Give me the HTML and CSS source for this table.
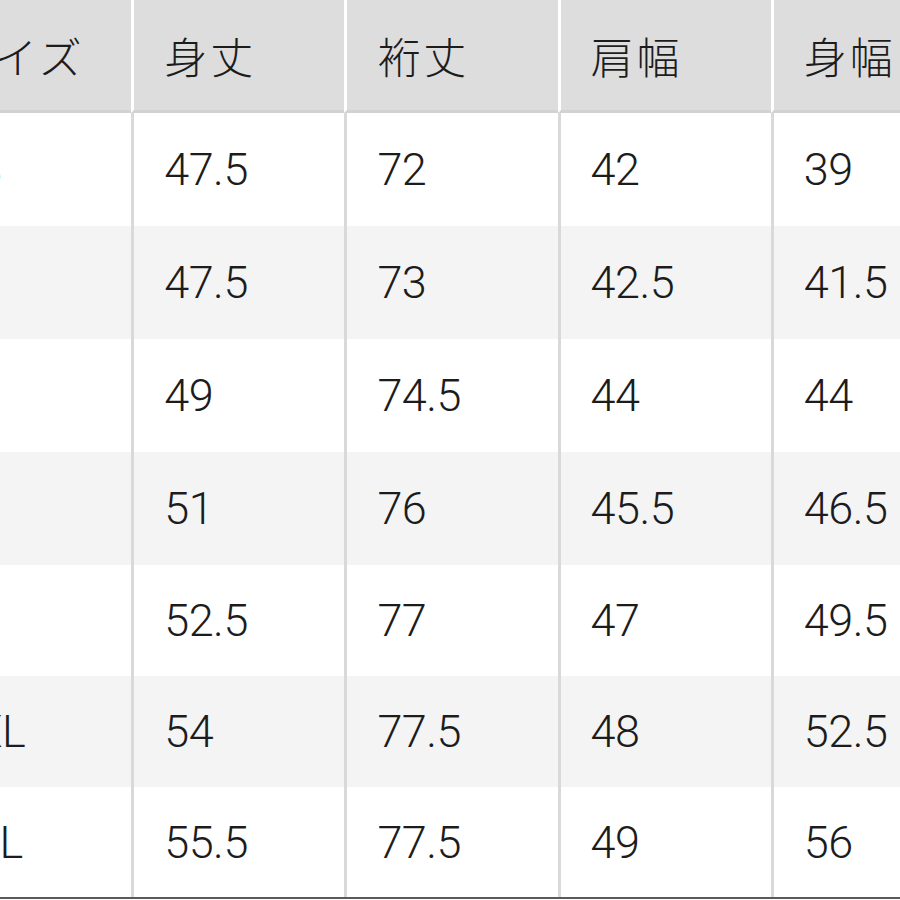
FILE: index.html
```html
<!DOCTYPE html>
<html lang="ja">
<head>
<meta charset="utf-8">
<title>サイズ表</title>
<link rel="stylesheet" href="styles.css">
</head>
<body>
<div class="viewport">
<table class="size-table">
  <colgroup>
    <col class="col"><col class="col"><col class="col"><col class="col"><col class="col">
  </colgroup>
  <thead>
    <tr><th>サイズ</th><th>身丈</th><th>裄丈</th><th>肩幅</th><th>身幅</th></tr>
  </thead>
  <tbody>
    <tr><td>XS</td><td>47.5</td><td>72</td><td>42</td><td>39</td></tr>
    <tr><td>S</td><td>47.5</td><td>73</td><td>42.5</td><td>41.5</td></tr>
    <tr><td>M</td><td>49</td><td>74.5</td><td>44</td><td>44</td></tr>
    <tr><td>L</td><td>51</td><td>76</td><td>45.5</td><td>46.5</td></tr>
    <tr><td>XL</td><td>52.5</td><td>77</td><td>47</td><td>49.5</td></tr>
    <tr><td>XXL</td><td>54</td><td>77.5</td><td>48</td><td>52.5</td></tr>
    <tr><td>3XL</td><td>55.5</td><td>77.5</td><td>49</td><td>56</td></tr>
  </tbody>
</table>
</div>
</body>
</html>
```
FILE: styles.css
```css
html, body {
  margin: 0;
  padding: 0;
  background: #ffffff;
}
.viewport {
  width: 900px;
  height: 900px;
  overflow: hidden;
}
.size-table {
  margin-left: -82px;
  border-collapse: separate;
  border-spacing: 0;
  table-layout: fixed;
  width: 1066px;
  font-family: Roboto, "Noto Sans CJK JP", sans-serif;
  color: #1c1c1c;
  border-bottom: 2px solid #5a5a5a;
}
.col {
  width: 213px;
}
.size-table th,
.size-table td {
  text-align: left;
  padding: 0 0 0 30px;
  white-space: nowrap;
  overflow: hidden;
}
.size-table th {
  height: 110px;
  background: #dddddd;
  border-left: 3px solid #ffffff;
  border-bottom: 3px solid #d2d2d2;
  font-family: "Noto Sans CJK JP", sans-serif;
  font-weight: 300;
  font-size: 43px;
  letter-spacing: 3px;
}
.size-table td {
  height: 113px;
  border-left: 3px solid #d9d9d9;
  font-size: 45px;
  font-weight: 300;
  letter-spacing: -0.5px;
}
.size-table tbody tr:nth-child(n+5) td {
  height: 111px;
}
.size-table tbody tr:last-child td {
  height: 110px;
}
.size-table th:first-child,
.size-table td:first-child {
  border-left: none;
}
.size-table tbody tr:nth-child(even) td {
  background: #f4f4f4;
}
```
